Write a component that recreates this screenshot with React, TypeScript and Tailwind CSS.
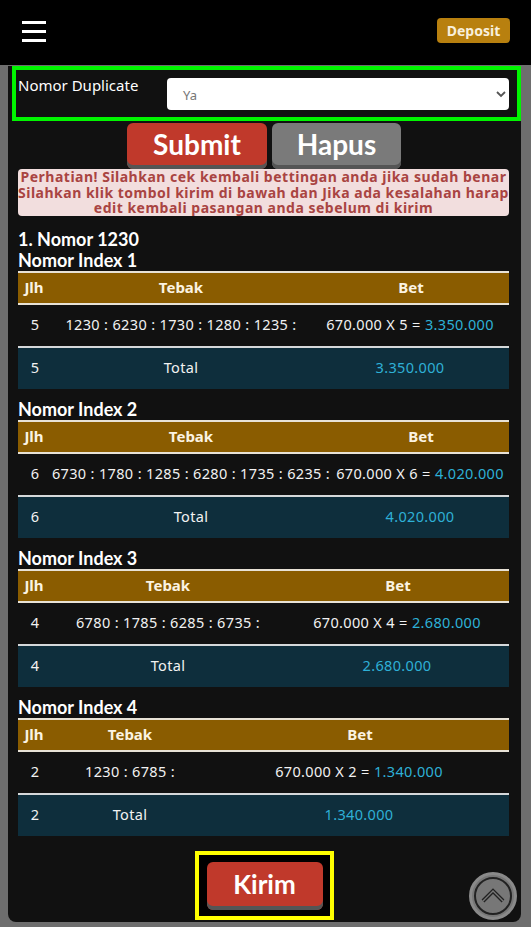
const font = "font-['Noto_Sans','Open_Sans',sans-serif]";
const heading = "font-['Lato',sans-serif]";

type Section = {
  title: string;
  jlh: string;
  tebak: string;
  bet: string;
  total: string;
  midCol: string;
  betCol: string;
};

const sections: Section[] = [
  {
    title: "Nomor Index 1",
    jlh: "5",
    tebak: "1230 : 6230 : 1730 : 1280 : 1235 :",
    bet: "670.000 X 5 =",
    total: "3.350.000",
    midCol: "w-[264px]",
    betCol: "w-[196px]",
  },
  {
    title: "Nomor Index 2",
    jlh: "6",
    tebak: "6730 : 1780 : 1285 : 6280 : 1735 : 6235 :",
    bet: "670.000 X 6 =",
    total: "4.020.000",
    midCol: "w-[284px]",
    betCol: "w-[176px]",
  },
  {
    title: "Nomor Index 3",
    jlh: "4",
    tebak: "6780 : 1785 : 6285 : 6735 :",
    bet: "670.000 X 4 =",
    total: "2.680.000",
    midCol: "w-[238px]",
    betCol: "w-[222px]",
  },
  {
    title: "Nomor Index 4",
    jlh: "2",
    tebak: "1230 : 6785 :",
    bet: "670.000 X 2 =",
    total: "1.340.000",
    midCol: "w-[162px]",
    betCol: "w-[298px]",
  },
];

function BetTable({ s }: { s: Section }) {
  return (
    <div>
      <h4 className={`${heading} text-[18px] font-bold leading-[21px] text-white`}>{s.title}</h4>
      <table className="w-full table-fixed border-collapse text-[14.5px] tracking-[0.35px] text-[#f2f2f2]">
        <thead>
          <tr className="h-[32px] border-y-2 border-[#e8e2d6] bg-[#8a5c00] text-[15px] font-bold tracking-normal text-[#fbf3e2]">
            <th className="w-[31px] pl-[1px]">Jlh</th>
            <th className={s.midCol}>Tebak</th>
            <th className={s.betCol}>Bet</th>
          </tr>
        </thead>
        <tbody>
          <tr className="h-[43px] border-b-2 border-[#d5d8da]">
            <td className="pl-[3px] text-center">{s.jlh}</td>
            <td className="whitespace-nowrap text-center">{s.tebak}</td>
            <td className="whitespace-nowrap pr-[2px] text-center">
              {s.bet} <span className="text-[#2eb0d6]">{s.total}</span>
            </td>
          </tr>
          <tr className="h-[42px] bg-[#0e2e3c]">
            <td className="pl-[3px] text-center">{s.jlh}</td>
            <td className="text-center">Total</td>
            <td className="pr-[2px] text-center text-[#2eb0d6]">{s.total}</td>
          </tr>
        </tbody>
      </table>
    </div>
  );
}

export default function App() {
  return (
    <div className={`${font} relative h-[927px] w-[531px] overflow-hidden bg-[#6e6e6e]`}>
      <header className="flex h-[65px] items-start justify-between bg-black pl-[22px] pr-[21px] pt-[18px]">
        <div className="mt-[3px] flex w-[24px] flex-col gap-[6px]">
          <span className="h-[3px] bg-white" />
          <span className="h-[3px] bg-white" />
          <span className="h-[3px] bg-white" />
        </div>
        <button className="h-[25px] w-[73px] rounded-[4px] bg-[#b8800f] text-[14px] font-bold text-[#f8efdc]">
          Deposit
        </button>
      </header>

      <main className="mx-[8px] h-[856px] w-[513px] rounded-b-[8px] bg-[#111111] pl-[10px] pr-[12px]">
        <div className="-ml-[6px] -mr-[12px] mt-[1px] flex h-[55px] items-start border-4 border-[#00f500] pl-[2px] pr-[8px]">
          <span className="w-[149px] pt-[4px] text-[15px] leading-[22px] text-white">Nomor Duplicate</span>
          <div className="relative mt-[8px] flex h-[32px] flex-1 items-center rounded-[4px] bg-white pl-[16px] text-[13px] text-[#777]">
            <span className="mt-[3px]">Ya</span>
            <svg className="absolute right-[3px] top-[11px] h-[10px] w-[10px]" viewBox="0 0 10 10" fill="none">
              <path d="M1 3l4 4 4-4" stroke="#555" strokeWidth="1.8" />
            </svg>
          </div>
        </div>

        <div className={`${heading} mt-[2px] flex justify-center gap-[5px] pl-[1px]`}>
          <button className="h-[46px] w-[140px] rounded-[6px] bg-[#c0392b] pb-[5px] text-[28px] font-bold leading-none text-white shadow-[inset_0_-4px_0_#555]">
            Submit
          </button>
          <button className="h-[46px] w-[129px] rounded-[6px] bg-[#7a7a7a] pb-[5px] text-[28px] font-bold leading-none text-white shadow-[inset_0_-4px_0_#555]">
            Hapus
          </button>
        </div>

        <p className="whitespace-nowrap rounded-[4px] bg-[#f2dede] text-center text-[14px] font-bold leading-[15.5px] tracking-[0.5px] text-[#a94442]">
          Perhatian! Silahkan cek kembali bettingan anda jika sudah benar
          <br />
          Silahkan klik tombol kirim di bawah dan Jika ada kesalahan harap
          <br />
          edit kembali pasangan anda sebelum di kirim
        </p>

        <h3 className={`${heading} mt-[13px] text-[18px] font-bold leading-[21px] text-white`}>1. Nomor 1230</h3>
        <div className="flex flex-col gap-[10px]">
          {sections.map((s) => (
            <BetTable key={s.title} s={s} />
          ))}
        </div>

        <div className={`${heading} mt-[15px] flex justify-center pl-[2px]`}>
          <div className="flex h-[69px] w-[139px] justify-center border-4 border-[#ffff00] bg-black pt-[7px]">
            <button className="h-[48px] w-[116px] rounded-[6px] bg-[#c0392b] pb-[4px] text-[26px] font-bold leading-none text-white shadow-[inset_0_-4px_0_#555]">
              Kirim
            </button>
          </div>
        </div>
      </main>

      <div className="absolute left-[469px] top-[872px] flex h-[48px] w-[48px] items-center justify-center rounded-full border-[3px] border-[#8a8a8a] bg-[#777]">
        <div className="flex h-[38px] w-[38px] items-center justify-center rounded-full border-2 border-[#222]">
          <svg className="h-[24px] w-[24px]" viewBox="0 0 24 24" fill="none">
            <path d="M2 17L12 7l10 10" stroke="#222" strokeWidth="4" />
            <path d="M2 17L12 7l10 10" stroke="#777" strokeWidth="1.4" />
          </svg>
        </div>
      </div>
    </div>
  );
}
